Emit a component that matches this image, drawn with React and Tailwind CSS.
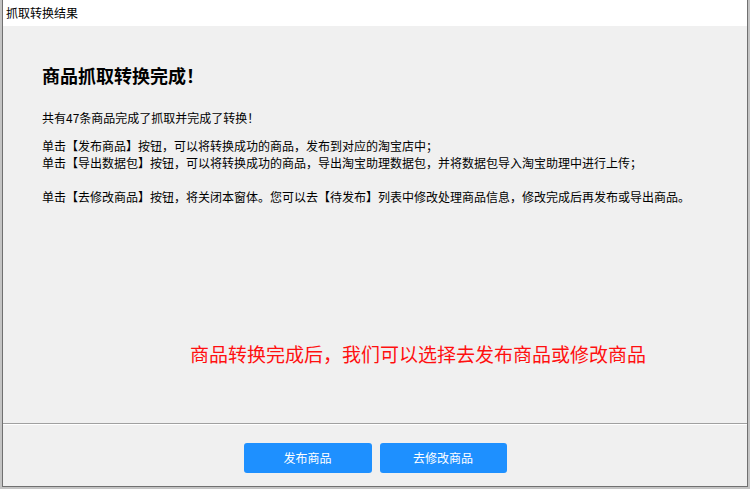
import React from "react";

export default function App() {
  const font = { fontFamily: '"Noto Sans CJK SC", "Noto Sans", sans-serif' };
  return (
    <div className="w-[750px] h-[489px] bg-[#c4c4c4] overflow-hidden" style={font}>
      <div className="ml-[2px] w-[746px] h-[487px] border border-[#707070] border-t-0 bg-[#f0f0f0] flex flex-col">
        <div className="h-[26px] bg-white flex items-center pl-[3px] text-[12px] text-black leading-none">
          抓取转换结果
        </div>
        <div className="h-[397px] flex flex-col pl-[39px] pt-[37px] text-black">
          <div className="text-[18px] font-bold leading-[24px] tracking-[0px]">商品抓取转换完成！</div>
          <div className="mt-[22px] text-[12px] leading-[17px]">共有47条商品完成了抓取并完成了转换！</div>
          <div className="mt-[11px] text-[12px] leading-[17px]">
            <div>单击【发布商品】按钮，可以将转换成功的商品，发布到对应的淘宝店中；</div>
            <div>单击【导出数据包】按钮，可以将转换成功的商品，导出淘宝助理数据包，并将数据包导入淘宝助理中进行上传；</div>
            <div className="h-[17px]"></div>
            <div>单击【去修改商品】按钮，将关闭本窗体。您可以去【待发布】列表中修改处理商品信息，修改完成后再发布或导出商品。</div>
          </div>
          <div className="mt-[137px] ml-[148px] text-[19px] leading-[24px] text-[#ff1010]">
            商品转换完成后，我们可以选择去发布商品或修改商品
          </div>
        </div>
        <div className="h-[1px] bg-[#a0a0a0]"></div>
        <div className="h-[1px] bg-white"></div>
        <div className="flex-1 flex justify-center pt-[18px] gap-[8px]">
          <button className="w-[128px] h-[30px] bg-[#1e90ff] rounded-[3px] text-white text-[12px] leading-none">
            发布商品
          </button>
          <button className="w-[127px] h-[30px] bg-[#1e90ff] rounded-[3px] text-white text-[12px] leading-none">
            去修改商品
          </button>
        </div>
      </div>
    </div>
  );
}
